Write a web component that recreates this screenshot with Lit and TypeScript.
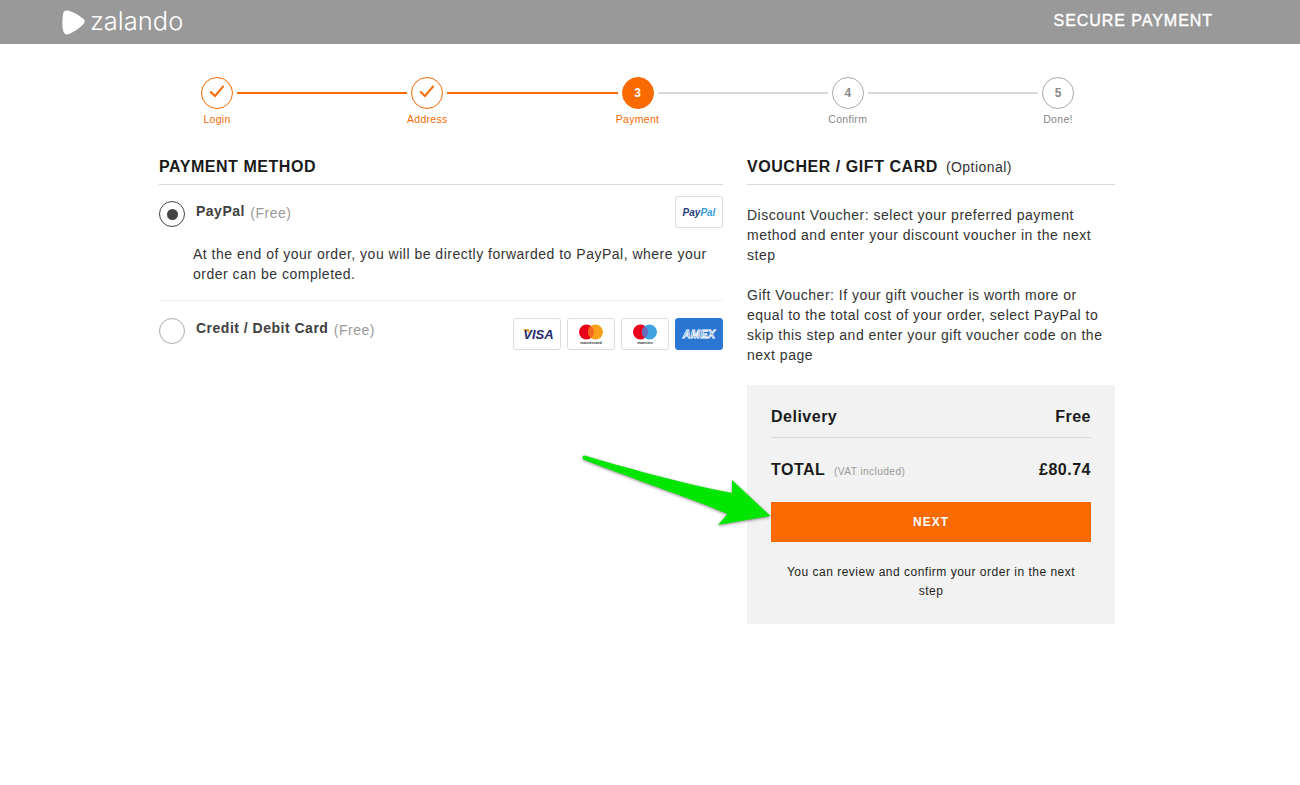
import { LitElement, html, css } from "lit";
import { customElement } from "lit/decorators.js";

const check = html`<svg width="16" height="16" viewBox="0 0 16 16" fill="none"><path d="M1.2 6.6 L6 11 L14.6 0.8" stroke="#f96a02" stroke-width="2"/></svg>`;

@customElement("app-root")
export class AppRoot extends LitElement {
  static styles = css`
    :host { display: block; min-height: 785px; background: #fff; position: relative; overflow: hidden;
      font-family: "Liberation Sans", Arial, sans-serif; color: #333; }
    * { box-sizing: border-box; }
    .header { height: 44px; background: #999; display: flex; align-items: center; justify-content: space-between;
      padding: 0 87px 0 62px; color: #fff; }
    .brand { display: flex; align-items: center; gap: 5px; }
    .brand-name { font-family: Inter, sans-serif; font-weight: 300; font-size: 25.5px; line-height: 44px; letter-spacing: 0; margin-top: -3px; }
    .secure { font-size: 16px; font-weight: 400; letter-spacing: 0.95px; -webkit-text-stroke: 0.4px #fff; margin-top: -3px; }

    .stepper { display: flex; margin: 33px 0 0 201px; width: 873px; }
    .step { width: 32px; display: flex; flex-direction: column; align-items: center; flex: none; }
    .dot { width: 32px; height: 32px; border-radius: 50%; border: 1px solid #aaa; display: flex; align-items: center; justify-content: center;
      font-size: 12px; font-weight: 700; color: #888; background: #fff; }
    .step.done .dot { border-color: #f96a02; }
    .step.now .dot { background: #f96a02; border-color: #f96a02; color: #fff; }
    .label { font-size: 10.5px; line-height: 14px; margin-top: 3px; white-space: nowrap; color: #888; letter-spacing: 0.3px; }
    .step.done .label, .step.now .label { color: #f96a02; }
    .line { flex: 1; height: 2px; margin: 15px 4px 0; background: #d9d9d9; }
    .line.on { background: #f96a02; }

    .main { display: flex; gap: 24px; margin: 22px 0 0 159px; width: 956px; align-items: flex-start; }
    .left { width: 564px; }
    .right { width: 368px; }
    .head { height: 37px; border-bottom: 1px solid #d9d9d9; font-size: 16px; font-weight: 700; letter-spacing: 0.55px; color: #1a1a1a; line-height: 22px; padding-top: 8px; }
    .opt { font-weight: 400; font-size: 14px; letter-spacing: 0.45px; color: #333; margin-left: 3px; }

    .pay { display: flex; align-items: flex-start; }
    .pay.first { padding-top: 11px; }
    .pay.second { padding-top: 17px; }
    .radio { width: 26px; height: 26px; border-radius: 50%; border: 1px solid #aaa; flex: none; display: flex; align-items: center; justify-content: center; margin-top: 5px; }
    .radio.on { border: 1.5px solid #444; }
    .radio.on::after { content: ""; width: 11px; height: 11px; border-radius: 50%; background: #444; }
    .pay.second .radio { margin-top: 0; }
    .pay-name { margin-left: 11px; font-size: 14px; font-weight: 700; color: #404040; letter-spacing: 0.5px; line-height: 20px; margin-top: 5px; flex: 1; }
    .pay.second .pay-name { margin-top: 0; }
    .free { font-weight: 400; color: #999; margin-left: 1px; position: relative; top: 2px; }
    .cards { display: flex; gap: 6px; }
    .card { width: 48px; height: 32px; border: 1px solid #ddd; border-radius: 3px; background: #fff; display: flex; align-items: center; justify-content: center; overflow: hidden; }
    .card.amex { background: #2a76d2; border-color: #2a76d2; }
    .card svg { display: block; }
    .desc { margin: 16px 0 0 34px; font-size: 14px; line-height: 20px; letter-spacing: 0.5px; color: #333; padding-bottom: 16px; }
    .divider { border-top: 1px solid #eee; }

    .text { font-size: 14px; line-height: 20px; letter-spacing: 0.5px; color: #333; margin: 20px 0 0; }
    .box { margin-top: 20px; background: #f2f2f2; padding: 21px 24px 23px; }
    .rowline { display: flex; justify-content: space-between; align-items: baseline; font-size: 16px; font-weight: 700; color: #1a1a1a; letter-spacing: 0.5px; line-height: 22px; }
    .delivery { padding-bottom: 9px; border-bottom: 1px solid #d9d9d9; }
    .total { margin-top: 21px; }
    .total .vat { font-size: 10.2px; font-weight: 400; color: #999; letter-spacing: 0.4px; margin-left: 4px; }
    .next { display: block; width: 100%; height: 40px; margin-top: 19px; padding: 0 0 1px; background: #f96a02; border: 0; color: #fff; font: 700 12px "Liberation Sans", Arial, sans-serif; letter-spacing: 1px; text-align: center; }
    .note { font-size: 12px; line-height: 19px; letter-spacing: 0.5px; text-align: center; color: #222; margin: 21px 10px 0; }
    .arrow { position: absolute; left: 575px; top: 450px; overflow: visible; filter: drop-shadow(0 1.5px 1.5px rgba(60,40,60,0.55)); }
  `;

  private step(state: string, content: unknown, name: string) {
    return html`<div class="step ${state}"><div class="dot">${content}</div><div class="label">${name}</div></div>`;
  }

  render() {
    return html`
      <div class="header">
        <div class="brand">
          <svg width="23" height="25" viewBox="0 0 23 25"><path d="M1.2 3.6 C1.4 1 3.6 -0.1 6 0.6 C10.5 2 16 4.8 21 8.6 C23.2 10.3 23.2 12.4 21.4 14.2 C17.5 18 12.5 21.5 7 24 C4.6 25 2.4 24.2 1.6 22 C-0.2 16.5 0.2 9.5 1.2 3.6 Z" fill="#fff"/></svg>
          <span class="brand-name">zalando</span>
        </div>
        <div class="secure">SECURE PAYMENT</div>
      </div>

      <div class="stepper">
        ${this.step("done", check, "Login")}<div class="line on"></div>
        ${this.step("done", check, "Address")}<div class="line on"></div>
        ${this.step("now", "3", "Payment")}<div class="line"></div>
        ${this.step("", "4", "Confirm")}<div class="line"></div>
        ${this.step("", "5", "Done!")}
      </div>

      <div class="main">
        <div class="left">
          <div class="head">PAYMENT METHOD</div>
          <div class="pay first">
            <div class="radio on"></div>
            <div class="pay-name">PayPal <span class="free">(Free)</span></div>
            <div class="card">
              <svg width="36" height="14" viewBox="0 0 36 14"><text x="18" y="10.5" text-anchor="middle" font-family="Liberation Sans" font-weight="700" font-style="italic" font-size="10"><tspan fill="#253b80">Pay</tspan><tspan fill="#3a9bdc">Pal</tspan></text></svg>
            </div>
          </div>
          <div class="desc">At the end of your order, you will be directly forwarded to PayPal, where your order can be completed.</div>
          <div class="divider"></div>
          <div class="pay second">
            <div class="radio"></div>
            <div class="pay-name">Credit / Debit Card <span class="free">(Free)</span></div>
            <div class="cards">
              <div class="card">
                <svg width="34" height="16" viewBox="0 0 34 16"><path d="M2 3 L9 3 L10.5 9 C9 6.5 6 4 2 3 Z" fill="#f2a23a"/><text x="18.5" y="13" text-anchor="middle" font-family="Liberation Sans" font-weight="700" font-style="italic" font-size="13" fill="#252b6b">VISA</text></svg>
              </div>
              <div class="card">
                <svg width="30" height="24" viewBox="0 0 30 24"><circle cx="10.5" cy="10" r="7.5" fill="#eb001b"/><circle cx="19.5" cy="10" r="7.5" fill="#f9a01b"/><path d="M15 4 a7.5 7.5 0 0 1 0 12 a7.5 7.5 0 0 1 0 -12 Z" fill="#f4691f"/><text x="15" y="21.8" text-anchor="middle" font-family="Liberation Sans" font-weight="700" font-size="4" fill="#333">mastercard</text></svg>
              </div>
              <div class="card">
                <svg width="30" height="24" viewBox="0 0 30 24"><circle cx="10.5" cy="10" r="7.5" fill="#eb001b"/><circle cx="19.5" cy="10" r="7.5" fill="#3fa3e0"/><path d="M15 4 a7.5 7.5 0 0 1 0 12 a7.5 7.5 0 0 1 0 -12 Z" fill="#6c6bbd"/><text x="15" y="21.8" text-anchor="middle" font-family="Liberation Sans" font-weight="700" font-size="4" fill="#333">maestro</text></svg>
              </div>
              <div class="card amex">
                <svg width="36" height="14" viewBox="0 0 36 14"><text x="18" y="11" text-anchor="middle" font-family="Liberation Sans" font-weight="700" font-style="italic" font-size="11" fill="#2a76d2" stroke="#fff" stroke-width="0.8" letter-spacing="0.2">AMEX</text></svg>
              </div>
            </div>
          </div>
        </div>

        <div class="right">
          <div class="head">VOUCHER / GIFT CARD <span class="opt">(Optional)</span></div>
          <p class="text">Discount Voucher: select your preferred payment method and enter your discount voucher in the next step</p>
          <p class="text">Gift Voucher: If your gift voucher is worth more or equal to the total cost of your order, select PayPal to skip this step and enter your gift voucher code on the next page</p>
          <div class="box">
            <div class="rowline delivery"><span>Delivery</span><span>Free</span></div>
            <div class="rowline total"><span>TOTAL <span class="vat">(VAT included)</span></span><span>£80.74</span></div>
            <button class="next">NEXT</button>
            <p class="note">You can review and confirm your order in the next step</p>
          </div>
        </div>
      </div>

      <svg class="arrow" width="200" height="80" viewBox="575 450 200 80">
        <path d="M584.5 455.5 C 620 466 680 483 732 493 L732 480 L770.5 516 L718 525 L727.5 514 C 690 498 630 478 583.5 459.5 C 582 458 582.5 455.5 584.5 455.5 Z" fill="#00e600"/>
      </svg>
    `;
  }
}
